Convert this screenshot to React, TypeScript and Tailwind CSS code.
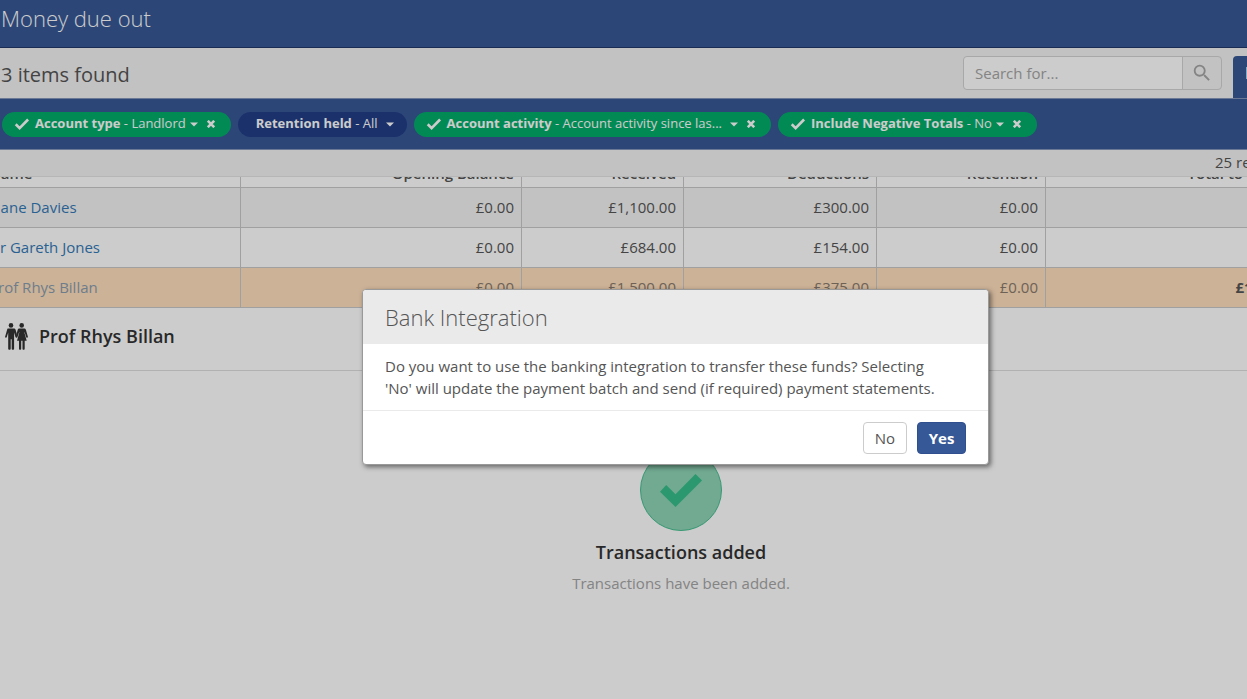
import type { ReactNode } from "react";
import { MdSearch } from "react-icons/md";

type Filter = {
  label: string;
  value: string;
  active: boolean;
  roomy?: boolean;
};

const filters: Filter[] = [
  { label: "Account type", value: "Landlord", active: true },
  { label: "Retention held", value: "All", active: false, roomy: true },
  { label: "Account activity", value: "Account activity since las...", active: true, roomy: true },
  { label: "Include Negative Totals", value: "No", active: true },
];

const columns = ["Opening Balance", "Received", "Deductions", "Retention", "Total to Pay Out"];

const rows = [
  { name: "Liane Davies", opening: "£0.00", received: "£1,100.00", deductions: "£300.00", retention: "£0.00", total: "" },
  { name: "Dr Gareth Jones", opening: "£0.00", received: "£684.00", deductions: "£154.00", retention: "£0.00", total: "" },
  { name: "Prof Rhys Billan", opening: "£0.00", received: "£1,500.00", deductions: "£375.00", retention: "£0.00", total: "£1,125.00" },
];

const rowStyles = ["bg-[#f3f3f3]", "bg-white", "bg-[#ffdfbd] text-[#8a7b6d]"];

function Caret() {
  return (
    <svg viewBox="0 0 8 5" className="w-2 h-[5px] shrink-0" fill="currentColor" aria-hidden="true">
      <path d="M0 .5h8L4 4.5z" />
    </svg>
  );
}

function Tick() {
  return (
    <svg viewBox="0 0 16 13" className="w-4 h-3 shrink-0" fill="none" stroke="currentColor" strokeWidth="2.8" aria-hidden="true">
      <path d="M1.2 6.8l4.2 4.2L14.6 1.6" />
    </svg>
  );
}

function Cross() {
  return (
    <svg viewBox="0 0 8 8" className="size-2" fill="none" stroke="currentColor" strokeWidth="2.6" aria-hidden="true">
      <path d="M.8.8l6.4 6.4M7.2.8L.8 7.2" />
    </svg>
  );
}

function BigTick() {
  return (
    <svg viewBox="0 0 42 33" className="w-[42px] h-[33px]" fill="currentColor" aria-hidden="true">
      <path d="M0 17.7L6.2 11l9.3 9.3L35.5 0 42 6.4 15.5 33z" />
    </svg>
  );
}

function FilterPill({ filter }: { filter: Filter }) {
  return (
    <div
      className={`flex items-center h-[25px] rounded-full text-[13px] text-white whitespace-nowrap ${
        filter.active ? "bg-[#03ad6a] pl-3 pr-4" : "bg-[#223e86] pl-[18px] pr-[13px]"
      }`}
    >
      <button type="button" className="flex items-center">
        {filter.active && <Tick />}
        <span className={`${filter.active ? "pl-[5px]" : ""} ${filter.roomy ? "pr-2" : "pr-1"}`}>
          <b className="font-bold">{filter.label}</b> - {filter.value}
        </span>
        <Caret />
      </button>
      {filter.active && (
        <button type="button" aria-label={`Clear ${filter.label}`} className="ml-[9px]">
          <Cross />
        </button>
      )}
    </div>
  );
}

function Cell({ children }: { children: ReactNode }) {
  return <td className="border border-[#c9c9c9] px-[7px] text-right">{children}</td>;
}

function Couple() {
  return (
    <svg viewBox="0 0 23 27" className="w-[23px] h-[27px] shrink-0" fill="currentColor" aria-hidden="true">
      <circle cx="6" cy="2.4" r="2.3" />
      <circle cx="16.7" cy="2.4" r="2.3" />
      <path d="M3.2 5.4h5.6c.9 0 1.5.5 1.8 1.3l1.3 4.6-1.2 3.2-1.6-5v16.2c0 .8-.5 1.1-1.2 1.1s-1.2-.4-1.2-1.1v-9.5h-1v9.5c0 .7-.5 1.1-1.2 1.1s-1.3-.4-1.3-1.1V9.5l-1.5 4.8c-.3.8-1.8.5-1.6-.5l2-7.1c.2-.8.4-1.3 1.1-1.3z" />
      <path d="M14.4 5.4h4.7c.9 0 1.5.5 1.8 1.3l2 7c.2 1-1.2 1.4-1.6.5l-1.7-4.9h-.3l2.4 8.5h-2v7.9c0 .7-.4 1.1-1.1 1.1s-1.1-.4-1.1-1.1v-7.9h-1.3v7.9c0 .7-.4 1.1-1.1 1.1s-1.1-.4-1.1-1.1v-7.9h-2l2.4-8.5h-.3l-1.7 4.9c-.3.9-1.7.8-1.8-.1l2.1-7.4c.3-.8.9-1.3 1.7-1.3z" />
    </svg>
  );
}

export default function App() {
  return (
    <div className="relative min-h-screen overflow-hidden bg-white font-['Open_Sans',sans-serif] text-[15px] text-[#555]">
      <header className="h-12 bg-[#375896] border-b border-[#22376a] pl-px pt-[3px]">
        <h1 className="text-[22px] leading-[30px] font-light text-white">Money due out</h1>
      </header>

      {/* results bar */}
      <div className="flex h-[50px] items-center bg-[#f3f3f3] pl-px">
        <h2 className="grow pt-1 text-[20px] leading-7">3 items found</h2>
        <form className="flex h-[34px] w-[259px] rounded border border-[#d2d2d2]">
          <input
            type="search"
            aria-label="Search"
            placeholder="Search for..."
            className="min-w-0 grow rounded-l bg-white px-[11px] placeholder:text-[#a5a5a5]"
          />
          <button type="button" aria-label="Search" className="flex w-[39px] items-center justify-center border-l border-[#d2d2d2] text-[#a5a5a5]">
            <MdSearch className="size-[22px]" />
          </button>
        </form>
        <div className="ml-[11px] flex h-[42px] w-[14px] self-end overflow-hidden rounded-tl bg-[#375896] pl-[13px]">
          <span className="mt-[11px] h-3 w-px bg-[#a8d8f8]" />
        </div>
      </div>

      {/* filters */}
      <div className="flex h-[52px] items-center gap-[7px] border-y border-[#8696bb] bg-[#375896] pl-0.5">
        {filters.map((f) => (
          <FilterPill key={f.label} filter={f} />
        ))}
      </div>

      <div className="flex h-[27px] justify-end overflow-hidden border-b border-[#e4e4e4] bg-[#f3f3f3] pt-0.5">
        <span className="w-8 whitespace-nowrap leading-5">25 results</span>
      </div>

      {/* scrolled table */}
      <div className="h-[131px] overflow-hidden">
        <table className="-mt-[30px] -ml-[17px] w-[calc(100%+82px)] table-fixed border-collapse">
          <colgroup>
            <col className="w-[257px]" />
            <col className="w-[281px]" />
            <col className="w-[162px]" />
            <col className="w-[193px]" />
            <col className="w-[169px]" />
            <col />
          </colgroup>
          <thead>
            <tr className="h-[40px] align-bottom leading-[22px]">
              <th className="border border-[#c9c9c9] px-[5px] pb-[3px] text-left font-semibold">Name</th>
              {columns.map((c) => (
                <th key={c} className="border border-[#c9c9c9] px-[7px] pb-[3px] text-right font-semibold">
                  {c}
                </th>
              ))}
            </tr>
          </thead>
          <tbody>
            {rows.map((row, i) => (
              <tr key={row.name} className={`h-[40px] ${rowStyles[i]}`}>
                <td className="border border-[#c9c9c9] px-[5px]">
                  <a href="#" className={i === 2 ? "text-[#8a9daf]" : "text-[#337ab7]"}>
                    {row.name}
                  </a>
                </td>
                <Cell>{row.opening}</Cell>
                <Cell>{row.received}</Cell>
                <Cell>{row.deductions}</Cell>
                <Cell>{row.retention}</Cell>
                <Cell>
                  <b className="text-[#555]">{row.total}</b>
                </Cell>
              </tr>
            ))}
          </tbody>
        </table>
      </div>

      <div className="flex h-[63px] items-center gap-[11px] border-b border-[#dedede] pl-[5px] pb-[6px] text-[#333]">
        <Couple />
        <h2 className="text-[18px] leading-7 font-semibold">Prof Rhys Billan</h2>
      </div>

      {/* confirmation message */}
      <section className="ml-[115px] flex flex-col items-center pt-[78px]">
        <div className="flex size-[82px] items-center justify-center rounded-full border border-[#45bf92] bg-[#8ed4b6] text-[#38bf8b]">
          <BigTick />
        </div>
        <h3 className="mt-[9px] text-[18px] leading-6 font-semibold text-[#333]">Transactions added</h3>
        <p className="mt-[9px] leading-5 text-[#a5a5a5]">Transactions have been added.</p>
      </section>

      {/* backdrop and dialog */}
      <div className="absolute inset-0 flex items-start justify-center bg-black/20 pt-[289px] pl-[104px]">
        <div
          role="dialog"
          aria-modal="true"
          aria-labelledby="dialog-title"
          className="w-[627px] overflow-hidden rounded border border-[#999] bg-white shadow-[2px_2px_5px_rgba(0,0,0,0.5)]"
        >
          <h2 id="dialog-title" className="bg-[#eaeaea] px-[22px] py-3 text-[22px] leading-[30px] font-light">
            Bank Integration
          </h2>
          <p className="pr-10 pl-[22px] py-[11px] leading-[22px]">
            Do you want to use the banking integration to transfer these funds? Selecting 'No' will update the payment
            batch and send (if required) payment statements.
          </p>
          <div className="flex justify-end gap-[10px] border-t border-[#eaeaea] px-[22px] pt-[11px] pb-[10px]">
            <button type="button" className="h-8 w-11 rounded border border-[#ccc] bg-white">
              No
            </button>
            <button type="button" className="h-8 w-[49px] rounded border border-[#2f4f8e] bg-[#375896] font-bold text-white">
              Yes
            </button>
          </div>
        </div>
      </div>
    </div>
  );
}
